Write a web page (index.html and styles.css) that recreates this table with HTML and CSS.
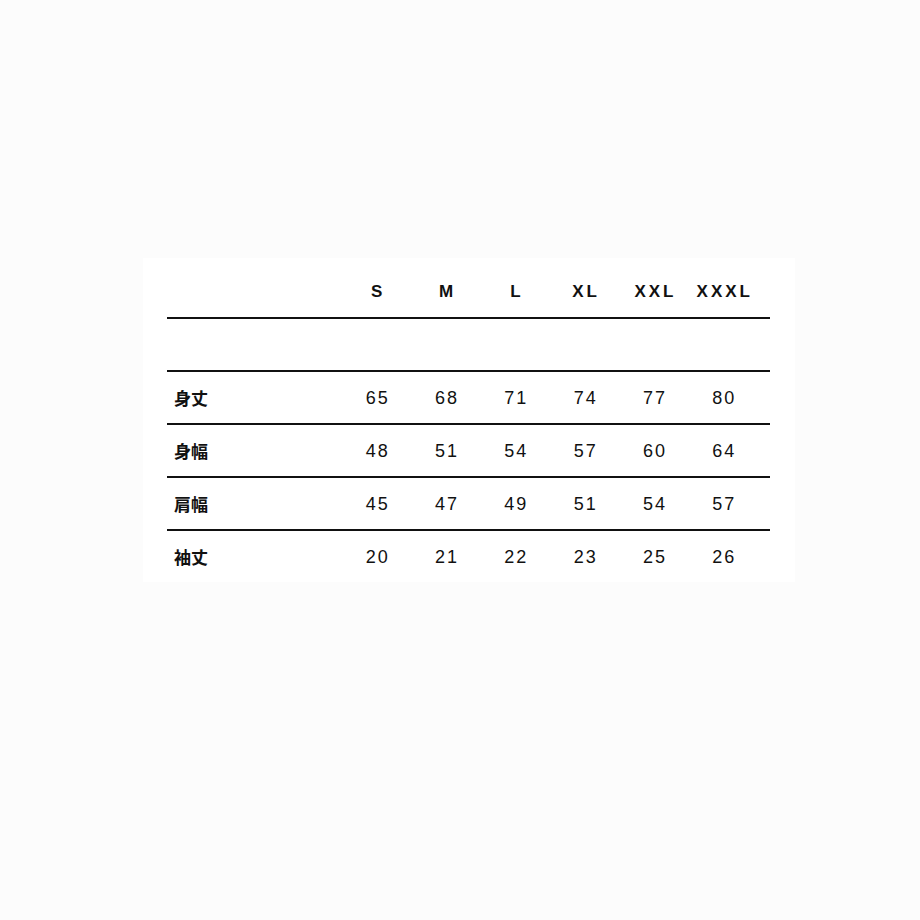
FILE: index.html
```html
<!DOCTYPE html>
<html lang="ja">
<head>
<meta charset="utf-8">
<title>サイズ表</title>
<link rel="stylesheet" href="styles.css">
</head>
<body>
<div class="page">
  <div class="panel">
    <div class="chart">
      <div class="row head">
        <div class="label"></div>
        <div class="cell">S</div>
        <div class="cell">M</div>
        <div class="cell">L</div>
        <div class="cell">XL</div>
        <div class="cell">XXL</div>
        <div class="cell">XXXL</div>
        <div class="pad"></div>
      </div>
      <div class="row empty">
        <div class="label"></div>
      </div>
      <div class="row">
        <div class="label">身丈</div>
        <div class="cell">65</div>
        <div class="cell">68</div>
        <div class="cell">71</div>
        <div class="cell">74</div>
        <div class="cell">77</div>
        <div class="cell">80</div>
        <div class="pad"></div>
      </div>
      <div class="row">
        <div class="label">身幅</div>
        <div class="cell">48</div>
        <div class="cell">51</div>
        <div class="cell">54</div>
        <div class="cell">57</div>
        <div class="cell">60</div>
        <div class="cell">64</div>
        <div class="pad"></div>
      </div>
      <div class="row">
        <div class="label">肩幅</div>
        <div class="cell">45</div>
        <div class="cell">47</div>
        <div class="cell">49</div>
        <div class="cell">51</div>
        <div class="cell">54</div>
        <div class="cell">57</div>
        <div class="pad"></div>
      </div>
      <div class="row last">
        <div class="label">袖丈</div>
        <div class="cell">20</div>
        <div class="cell">21</div>
        <div class="cell">22</div>
        <div class="cell">23</div>
        <div class="cell">25</div>
        <div class="cell">26</div>
        <div class="pad"></div>
      </div>
    </div>
  </div>
</div>
</body>
</html>
```
FILE: styles.css
```css
html, body {
  margin: 0;
  padding: 0;
  background: #fcfcfc;
}
.page {
  width: 920px;
  height: 920px;
  padding-top: 258px;
  padding-left: 143px;
  box-sizing: border-box;
}
.panel {
  width: 652px;
  background: #ffffff;
  padding: 8px 25px 0 24px;
  box-sizing: border-box;
}
.chart {
  width: 603px;
  font-family: "Liberation Sans", "Noto Sans CJK JP", sans-serif;
  color: #111111;
}
.row {
  display: grid;
  grid-template-columns: 175px repeat(6, 69.33px) 1fr;
  height: 51px;
  align-items: center;
  border-bottom: 2px solid #111111;
}
.row.last {
  border-bottom: none;
}
.label {
  padding-left: 7px;
  font-family: "Noto Sans CJK JP", sans-serif;
  font-weight: 700;
  font-size: 17px;
  line-height: 1;
}
.cell {
  text-align: center;
  font-size: 18px;
  letter-spacing: 2px;
  padding-left: 2px;
  line-height: 1;
  padding-top: 1px;
}
.head .cell {
  font-weight: 700;
  font-size: 17px;
  letter-spacing: 3px;
  padding-left: 3px;
  padding-top: 0;
}
```
